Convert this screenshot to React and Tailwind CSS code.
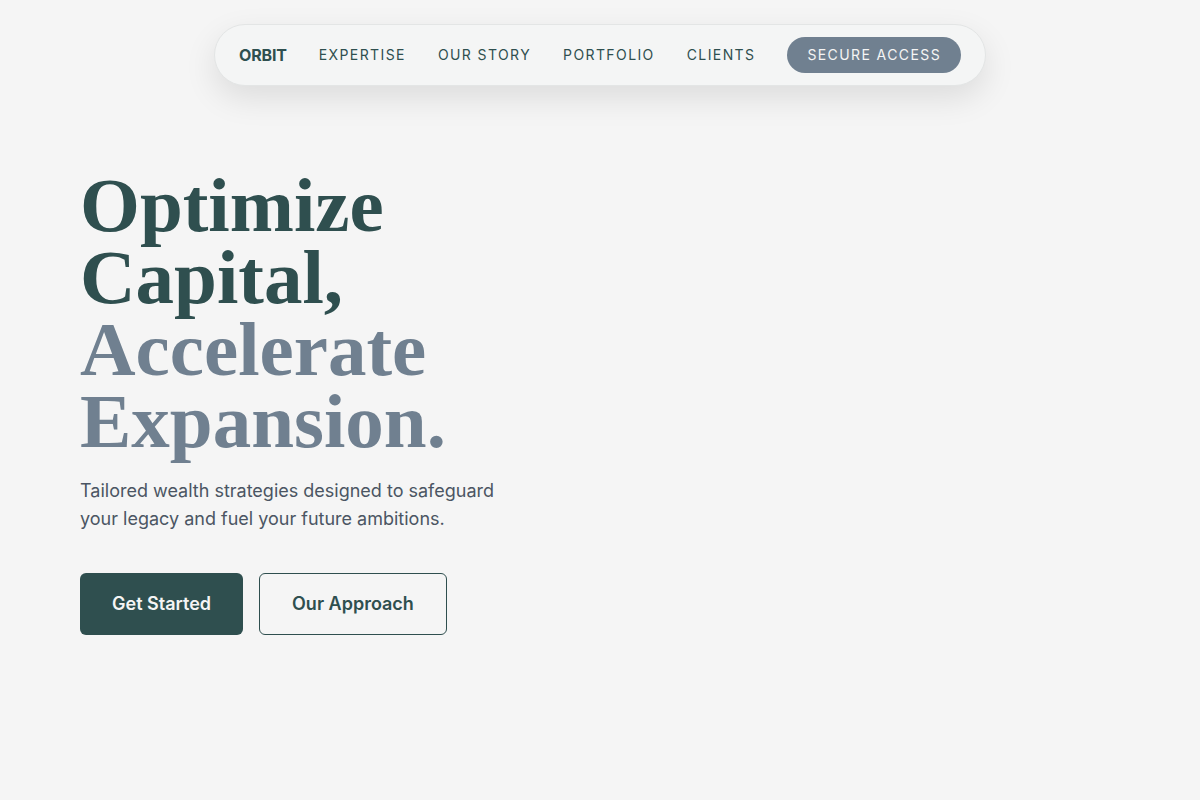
export default function App() {
  const links = ["EXPERTISE", "OUR STORY", "PORTFOLIO", "CLIENTS"];
  return (
    <div
      className="min-h-screen w-full bg-[#f5f5f5]"
      style={{ fontFamily: "Inter, 'Noto Sans', sans-serif" }}
    >
      <div className="flex justify-center pt-6">
        <nav className="flex items-center gap-8 rounded-full border border-[#e3e5e5] bg-[#f4f5f5] py-3 pl-6 pr-6 shadow-[0_12px_32px_rgba(0,0,0,0.10)]">
          <span className="text-base font-bold tracking-[-0.01em] text-[#2f4f4f]">ORBIT</span>
          {links.map((l) => (
            <span
              key={l}
              className="text-sm tracking-[0.1em] text-[#2f4f4f]"
            >
              {l}
            </span>
          ))}
          <span className="rounded-full bg-[#708090] px-5 py-2 text-sm tracking-[0.1em] text-[#f5f5f5]">
            SECURE ACCESS
          </span>
        </nav>
      </div>

      <main className="mt-[83px] pl-20">
        <h1
          className="text-[77px] font-bold leading-[72px]"
          style={{ fontFamily: "'Liberation Serif', 'DejaVu Serif', serif" }}
        >
          <span className="block text-[#2f4f4f]">Optimize</span>
          <span className="block text-[#2f4f4f]">Capital,</span>
          <span className="block text-[#708090]">Accelerate</span>
          <span className="block text-[#708090]">Expansion.</span>
        </h1>
        <p className="mt-5 max-w-md text-lg leading-7 text-[#4b5563]">
          Tailored wealth strategies designed to safeguard your legacy and fuel
          your future ambitions.
        </p>
        <div className="mt-10 flex gap-4">
          <button className="rounded-md bg-[#2f4f4f] px-8 py-4 text-lg font-semibold leading-7 text-[#f5f5f5]">
            Get Started
          </button>
          <button className="rounded-md border border-[#2f4f4f] px-8 py-4 text-lg font-semibold leading-7 text-[#2f4f4f]">
            Our Approach
          </button>
        </div>
      </main>
    </div>
  );
}
